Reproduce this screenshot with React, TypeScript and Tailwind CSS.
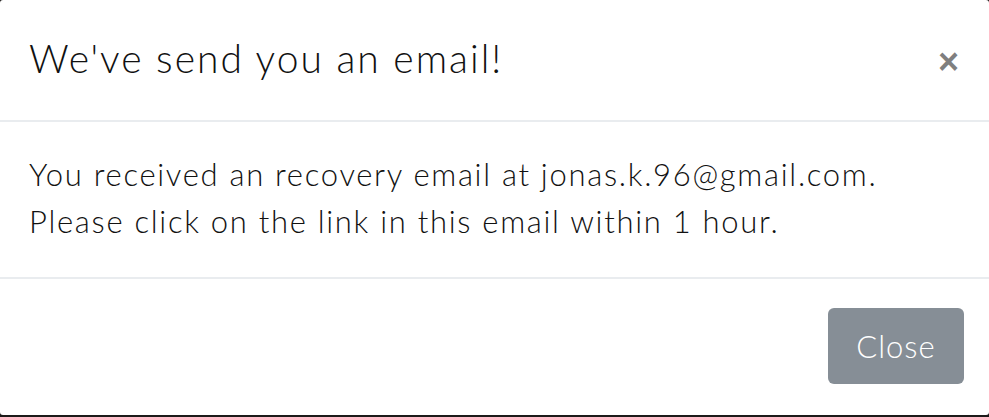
import React from 'react';

export default function App() {
  return (
    <div className="w-[989px] h-[417px] bg-[#1c1a19] overflow-hidden" style={{ fontFamily: 'Lato, "Open Sans", sans-serif' }}>
      <div className="h-[415px] bg-white rounded-[3px] flex flex-col text-[#111]">
        {/* Header */}
        <div className="h-[122px] px-[29px] flex items-center justify-between border-b-2 border-[#e9ecef]">
          <h5 className="text-[39px] leading-[58px] font-light tracking-[2px] -mt-[4px]">We've send you an email!</h5>
          <button className="text-[36px] leading-none font-bold text-black/50 mr-[1px] mt-[4px]" style={{ fontFamily: '"Liberation Sans", sans-serif' }}>
            ×
          </button>
        </div>

        {/* Body */}
        <div className="h-[157px] px-[29px] py-[29px] border-b-2 border-[#e9ecef]">
          <p className="text-[31px] leading-[47px] font-light tracking-[1.7px]">
            You received an recovery email at jonas.k.96@gmail.com.
            <br />
            Please click on the link in this email within 1 hour.
          </p>
        </div>

        {/* Footer */}
        <div className="flex-1 flex justify-end items-start pt-[29px] pr-[25px]">
          <button className="w-[136px] h-[76px] rounded-[6px] bg-[#868e96] text-white text-[31px] font-light tracking-[1px]">
            Close
          </button>
        </div>
      </div>
    </div>
  );
}
